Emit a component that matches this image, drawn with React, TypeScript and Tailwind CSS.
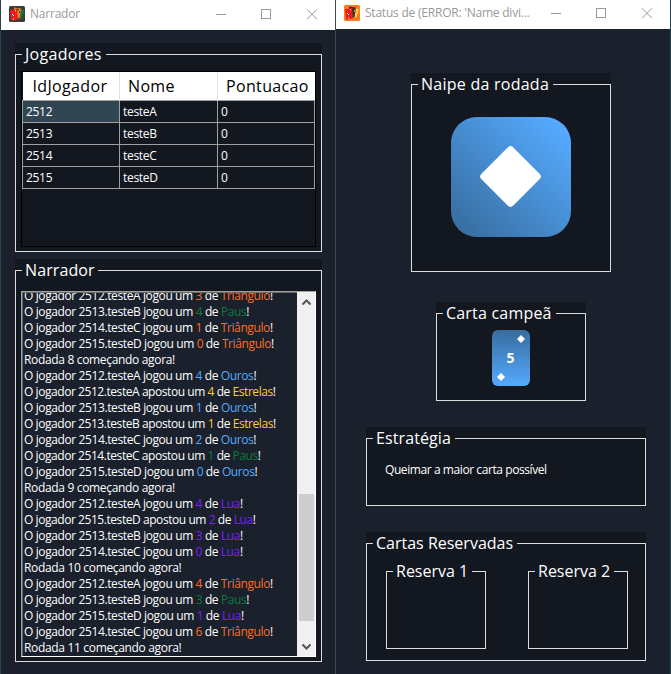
import type { ReactNode } from "react";

type Suit = "Triângulo" | "Paus" | "Ouros" | "Estrelas" | "Lua";
type Play = { player: string; verb: "jogou" | "apostou"; card: number; suit: Suit };
type Entry = Play | { round: number };

const suitColor: Record<Suit, string> = {
  Triângulo: "text-[#ff6d1f]",
  Paus: "text-[#0b7a3b]",
  Ouros: "text-[#55aaff]",
  Estrelas: "text-[#ffcc33]",
  Lua: "text-[#7a1fff]",
};

const play = (player: string, card: number, suit: Suit, verb: Play["verb"] = "jogou"): Play => ({ player, verb, card, suit });

const entries: Entry[] = [
  play("2512.testeA", 3, "Triângulo"),
  play("2513.testeB", 4, "Paus"),
  play("2514.testeC", 1, "Triângulo"),
  play("2515.testeD", 0, "Triângulo"),
  { round: 8 },
  play("2512.testeA", 4, "Ouros"),
  play("2512.testeA", 4, "Estrelas", "apostou"),
  play("2513.testeB", 1, "Ouros"),
  play("2513.testeB", 1, "Estrelas", "apostou"),
  play("2514.testeC", 2, "Ouros"),
  play("2514.testeC", 1, "Paus", "apostou"),
  play("2515.testeD", 0, "Ouros"),
  { round: 9 },
  play("2512.testeA", 4, "Lua"),
  play("2515.testeD", 2, "Lua", "apostou"),
  play("2513.testeB", 3, "Lua"),
  play("2514.testeC", 0, "Lua"),
  { round: 10 },
  play("2512.testeA", 4, "Triângulo"),
  play("2513.testeB", 3, "Paus"),
  play("2515.testeD", 1, "Lua"),
  play("2514.testeC", 6, "Triângulo"),
  { round: 11 },
];

const players = [
  ["2512", "testeA", "0"],
  ["2513", "testeB", "0"],
  ["2514", "testeC", "0"],
  ["2515", "testeD", "0"],
];

function Group({ title, className, legend, children }: { title: string; className: string; legend: string; children?: ReactNode }) {
  return (
    <div className={`shrink-0 bg-[#13171f] ${className}`}>
      <fieldset className="h-full border border-[#dcdcdc]">
        <legend className={`ml-1.5 h-[23px] whitespace-nowrap pl-[3px] text-base leading-[22px] text-white ${legend}`}>{title}</legend>
        {children}
      </fieldset>
    </div>
  );
}

function TitleBar({ icon, title, className }: { icon: ReactNode; title: string; className: string }) {
  return (
    <header className={`flex shrink-0 items-center bg-white pl-2 ${className}`}>
      {icon}
      <span className="ml-[5px] w-[185px] whitespace-nowrap text-xs tracking-[-0.22px] text-[#999]">{title}</span>
      <svg className="h-[11px] w-[103px]" viewBox="0 0 103 11" fill="none" stroke="#999" shapeRendering="crispEdges">
        <path d="M1 5.5h10M46.5.5h9v9h-9z" />
        <path d="M92 .3l10 10M102 .3l-10 10" shapeRendering="auto" />
      </svg>
    </header>
  );
}

function CardsIcon({ bg, back, middle }: { bg: string; back: string; middle: string }) {
  return (
    <svg className="size-4" viewBox="0 0 16 16">
      <rect width="16" height="16" rx="1.5" fill={bg} />
      <path d="M10 2l5 3-3 8-4-2z" fill={back} />
      <path d="M5 1.5l7 1-1.5 10-5-1z" fill={middle} />
      <path d="M7 2.5l3 .5-1 2z" fill="#43372b" />
      <path d="M1 4.2L8 3l1 10.5-7 1.3z" fill="#ed1c1c" />
      <path d="M6 4.3h1v1H6zM3 8h1v1H3zM4 9h1v1H4zM4 12.5h1v1H4z" fill="#fff" />
      <path d="M10 5h1v2h-1zM12 6h1v1h-1z" fill={bg} />
    </svg>
  );
}

function LogLine({ entry }: { entry: Entry }) {
  if ("round" in entry) return <p className="tracking-[-0.33px]">Rodada {entry.round} começando agora!</p>;
  const color = suitColor[entry.suit];
  return (
    <p className={entry.verb === "apostou" ? "tracking-[-0.44px]" : "tracking-[-0.39px]"}>
      O jogador {entry.player} {entry.verb} um <span className={color}>{entry.card}</span> de <span className={color}>{entry.suit}</span>!
    </p>
  );
}

function Chevron({ d }: { d: string }) {
  return (
    <svg className="h-[17px] w-[17px]" viewBox="0 0 17 17" fill="none" stroke="#555" strokeWidth="2">
      <path d={d} />
    </svg>
  );
}

function NarratorWindow() {
  return (
    <section className="flex w-[334px] flex-col bg-[#1a202c]">
      <TitleBar title="Narrador" className="h-[30px] pb-0.5" icon={<CardsIcon bg="#3b3b3b" back="#12813c" middle="#f58220" />} />
      <div className="flex flex-col gap-[7px] pl-3.5 pt-[13px]">
        <Group title="Jogadores" className="h-[209px] w-[307px]" legend="w-[84px] tracking-[0.3px]">
          <div className="ml-[5px] mt-[5px] h-[176px] w-[295px] border border-black">
            <table className="w-[293px] table-fixed border-collapse text-left text-white">
              <thead>
                <tr className="h-[28px] bg-white text-base tracking-[0.35px] text-black">
                  <th className="w-[97px] border-r border-[#e2e2e2] pl-2.5 font-normal leading-[28px]">IdJogador</th>
                  <th className="w-[98px] border-r border-[#e2e2e2] pl-2 font-normal leading-[28px]">Nome</th>
                  <th className="pl-2 font-normal leading-[28px]">Pontuacao</th>
                </tr>
              </thead>
              <tbody>
                {players.map((row, r) => (
                  <tr key={row[0]} className="h-[22px] text-xs tracking-[-0.3px]">
                    {row.map((cell, c) => (
                      <td key={c} className={`border border-[#a0a0a0] pl-[3px] leading-[21px] ${r === 0 && c === 0 ? "bg-[#304653]" : ""}`}>
                        {cell}
                      </td>
                    ))}
                  </tr>
                ))}
              </tbody>
            </table>
          </div>
        </Group>
        <Group title="Narrador" className="h-[403px] w-[307px]" legend="w-[76px] tracking-[0.1px]">
          <div className="ml-[5px] mt-[9px] flex h-[366px] w-[295px] border border-b-white border-l-[#a0a0a0] border-r-white border-t-[#a0a0a0] bg-[#1a202c]">
            <div className="flex w-[275px] flex-col justify-end overflow-hidden whitespace-nowrap border-l border-t border-[#696969] pl-px text-xs leading-4 text-white">
              {entries.map((entry, i) => (
                <LogLine key={i} entry={entry} />
              ))}
            </div>
            <div className="flex flex-1 flex-col items-center bg-[#f0f0f0] pt-0.5">
              <Chevron d="M4.5 10.5l4-4 4 4" />
              <div className="mt-[183px] h-[127px] w-[15px] bg-[#cdcdcd]" />
              <div className="mt-[17px]">
                <Chevron d="M4.5 6.5l4 4 4-4" />
              </div>
            </div>
          </div>
        </Group>
      </div>
    </section>
  );
}

function StatusWindow() {
  return (
    <section className="flex w-[334px] flex-col items-center bg-[#1a202c]">
      <TitleBar title="Status de (ERROR: 'Name divi..." className="h-[29px] w-full pb-[3px]" icon={<CardsIcon bg="#ff7a1a" back="#ffd34d" middle="#39352b" />} />
      <Group title="Naipe da rodada" className="mr-[-16px] mt-11 h-[199px] w-[200px]" legend="w-[135px] tracking-[0.25px]">
        <svg className="ml-[39px] mt-[21px] size-[120px]" viewBox="0 0 120 120">
          <defs>
            <linearGradient id="suit" x1="0" y1="1" x2="1" y2="0">
              <stop offset=".05" stopColor="#376d9f" />
              <stop offset=".92" stopColor="#55aaff" />
            </linearGradient>
          </defs>
          <rect width="120" height="120" rx="26" fill="url(#suit)" />
          <rect x="37" y="37" width="45" height="45" rx="4" transform="rotate(45 59.5 59.5)" fill="#fff" />
        </svg>
      </Group>
      <Group title="Carta campeã" className="mr-[-16px] mt-[30px] h-[99px] w-[150px]" legend="w-[113px] tracking-[0.2px]">
        <div className="ml-[55px] mt-[5px] flex h-14 w-[38px] flex-col justify-between rounded-md bg-linear-to-b from-[#376d9f] to-[#55aaff] p-[5px] text-white">
          <svg className="size-2 self-end" viewBox="0 0 8 8"><path d="M4 0l4 4-4 4-4-4z" fill="#fff" /></svg>
          <span className="mr-px text-center text-sm font-bold leading-5">5</span>
          <svg className="size-2" viewBox="0 0 8 8"><path d="M4 0l4 4-4 4-4-4z" fill="#fff" /></svg>
        </div>
      </Group>
      <Group title="Estratégia" className="mr-[-6px] mt-[26px] h-[79px] w-[280px]" legend="w-[82px] tracking-[0.1px]">
        <p className="ml-[18px] mt-3 whitespace-nowrap text-xs tracking-[-0.42px] text-white">Queimar a maior carta possível</p>
      </Group>
      <Group title="Cartas Reservadas" className="mr-[-6px] mt-[26px] h-[129px] w-[280px]" legend="w-[144px]">
        <div className="ml-[19px] mt-[5px] flex gap-[42px]">
          <Group title="Reserva 1" className="h-[89px] w-[100px]" legend="w-[79px]" />
          <Group title="Reserva 2" className="h-[89px] w-[100px]" legend="w-[79px]" />
        </div>
      </Group>
    </section>
  );
}

export default function App() {
  return (
    <main className="flex h-[674px] w-[671px] overflow-hidden bg-[#23464c] pl-px font-['Open_Sans','Noto_Sans',sans-serif]">
      <NarratorWindow />
      <div className="w-px bg-[#3c4b50]" />
      <StatusWindow />
    </main>
  );
}
